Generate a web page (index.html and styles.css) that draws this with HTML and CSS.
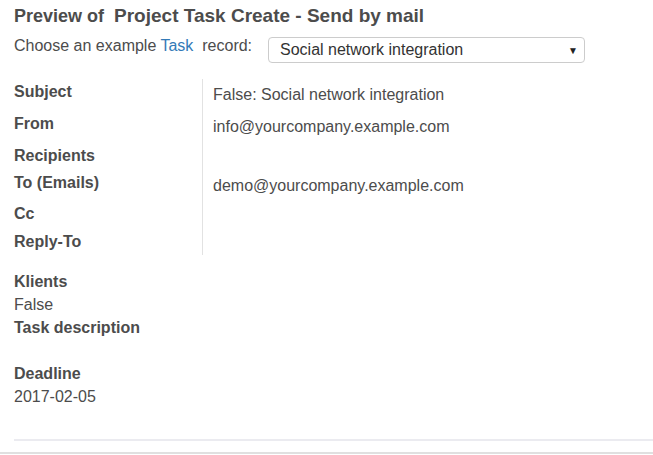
FILE: index.html
```html
<!DOCTYPE html>
<html>
<head>
<meta charset="utf-8">
<link rel="stylesheet" href="styles.css">
</head>
<body>
<div class="page">
  <h3 class="title">Preview of <span class="model">Project Task Create - Send by mail</span></h3>
  <div class="chooser">
    <span class="choose-text">Choose an example <a class="link" href="#">Task</a>&nbsp; record:</span>
    <div class="select"><span>Social network integration</span><span class="arrow">&#9660;</span></div>
  </div>
  <div class="fields">
    <div class="label r1">Subject</div><div class="value r1">False: Social network integration</div>
    <div class="label r2">From</div><div class="value r2">info@yourcompany.example.com</div>
    <div class="label r3">Recipients</div><div class="value r3"></div>
    <div class="label r4">To (Emails)</div><div class="value r4">demo@yourcompany.example.com</div>
    <div class="label r5">Cc</div><div class="value r5"></div>
    <div class="label r6">Reply-To</div><div class="value r6"></div>
  </div>
  <div class="body">
    <div class="b">Klients</div>
    <div>False</div>
    <div class="b">Task description</div>
    <div class="empty"></div>
    <div class="b">Deadline</div>
    <div>2017-02-05</div>
  </div>
  <div class="rule"></div>
</div>
<div class="footer"></div>
</body>
</html>
```
FILE: styles.css
```css
html, body {
  margin: 0;
  padding: 0;
  background: #fff;
}
body {
  font-family: "Liberation Sans", Arial, sans-serif;
  color: #4c4c4c;
  font-size: 16px;
  width: 653px;
  height: 455px;
  overflow: hidden;
}
.page {
  padding: 0 0 0 14px;
  height: 452px;
  box-sizing: border-box;
}
.title {
  margin: 0;
  padding-top: 5px;
  font-size: 18px;
  font-weight: bold;
  line-height: 22px;
  height: 24px;
}
.model {
  font-size: 19px;
  margin-left: 5px;
}
.chooser {
  display: flex;
  align-items: flex-start;
  height: 34px;
}
.choose-text {
  width: 254px;
  line-height: 20px;
  padding-top: 7px;
}
.link {
  color: #337ab7;
  text-decoration: none;
}
.select {
  box-sizing: border-box;
  margin-top: 8px;
  width: 317px;
  height: 26px;
  border: 1px solid #ccc;
  border-radius: 4px;
  display: flex;
  align-items: center;
  justify-content: space-between;
  padding: 0 6px 0 11px;
  color: #333;
}
.arrow {
  font-size: 10px;
  color: #222;
}
.fields {
  margin-top: 16px;
  display: grid;
  grid-template-columns: 188px 1fr;
  grid-template-rows: 32px 32px 27px 31px 28px 26px;
}
.label {
  font-weight: bold;
  line-height: 20px;
  padding-top: 3px;
}
.value {
  border-left: 1px solid #e2e2e2;
  padding-left: 10px;
  line-height: 20px;
  padding-top: 6px;
}
.body {
  margin-top: 15px;
  line-height: 23px;
}
.b {
  font-weight: bold;
}
.empty {
  height: 23px;
}
.rule {
  margin-top: 31px;
  height: 2px;
  background: #ebebf0;
}
.footer {
  height: 2px;
  background: #e0e0e0;
}
```
